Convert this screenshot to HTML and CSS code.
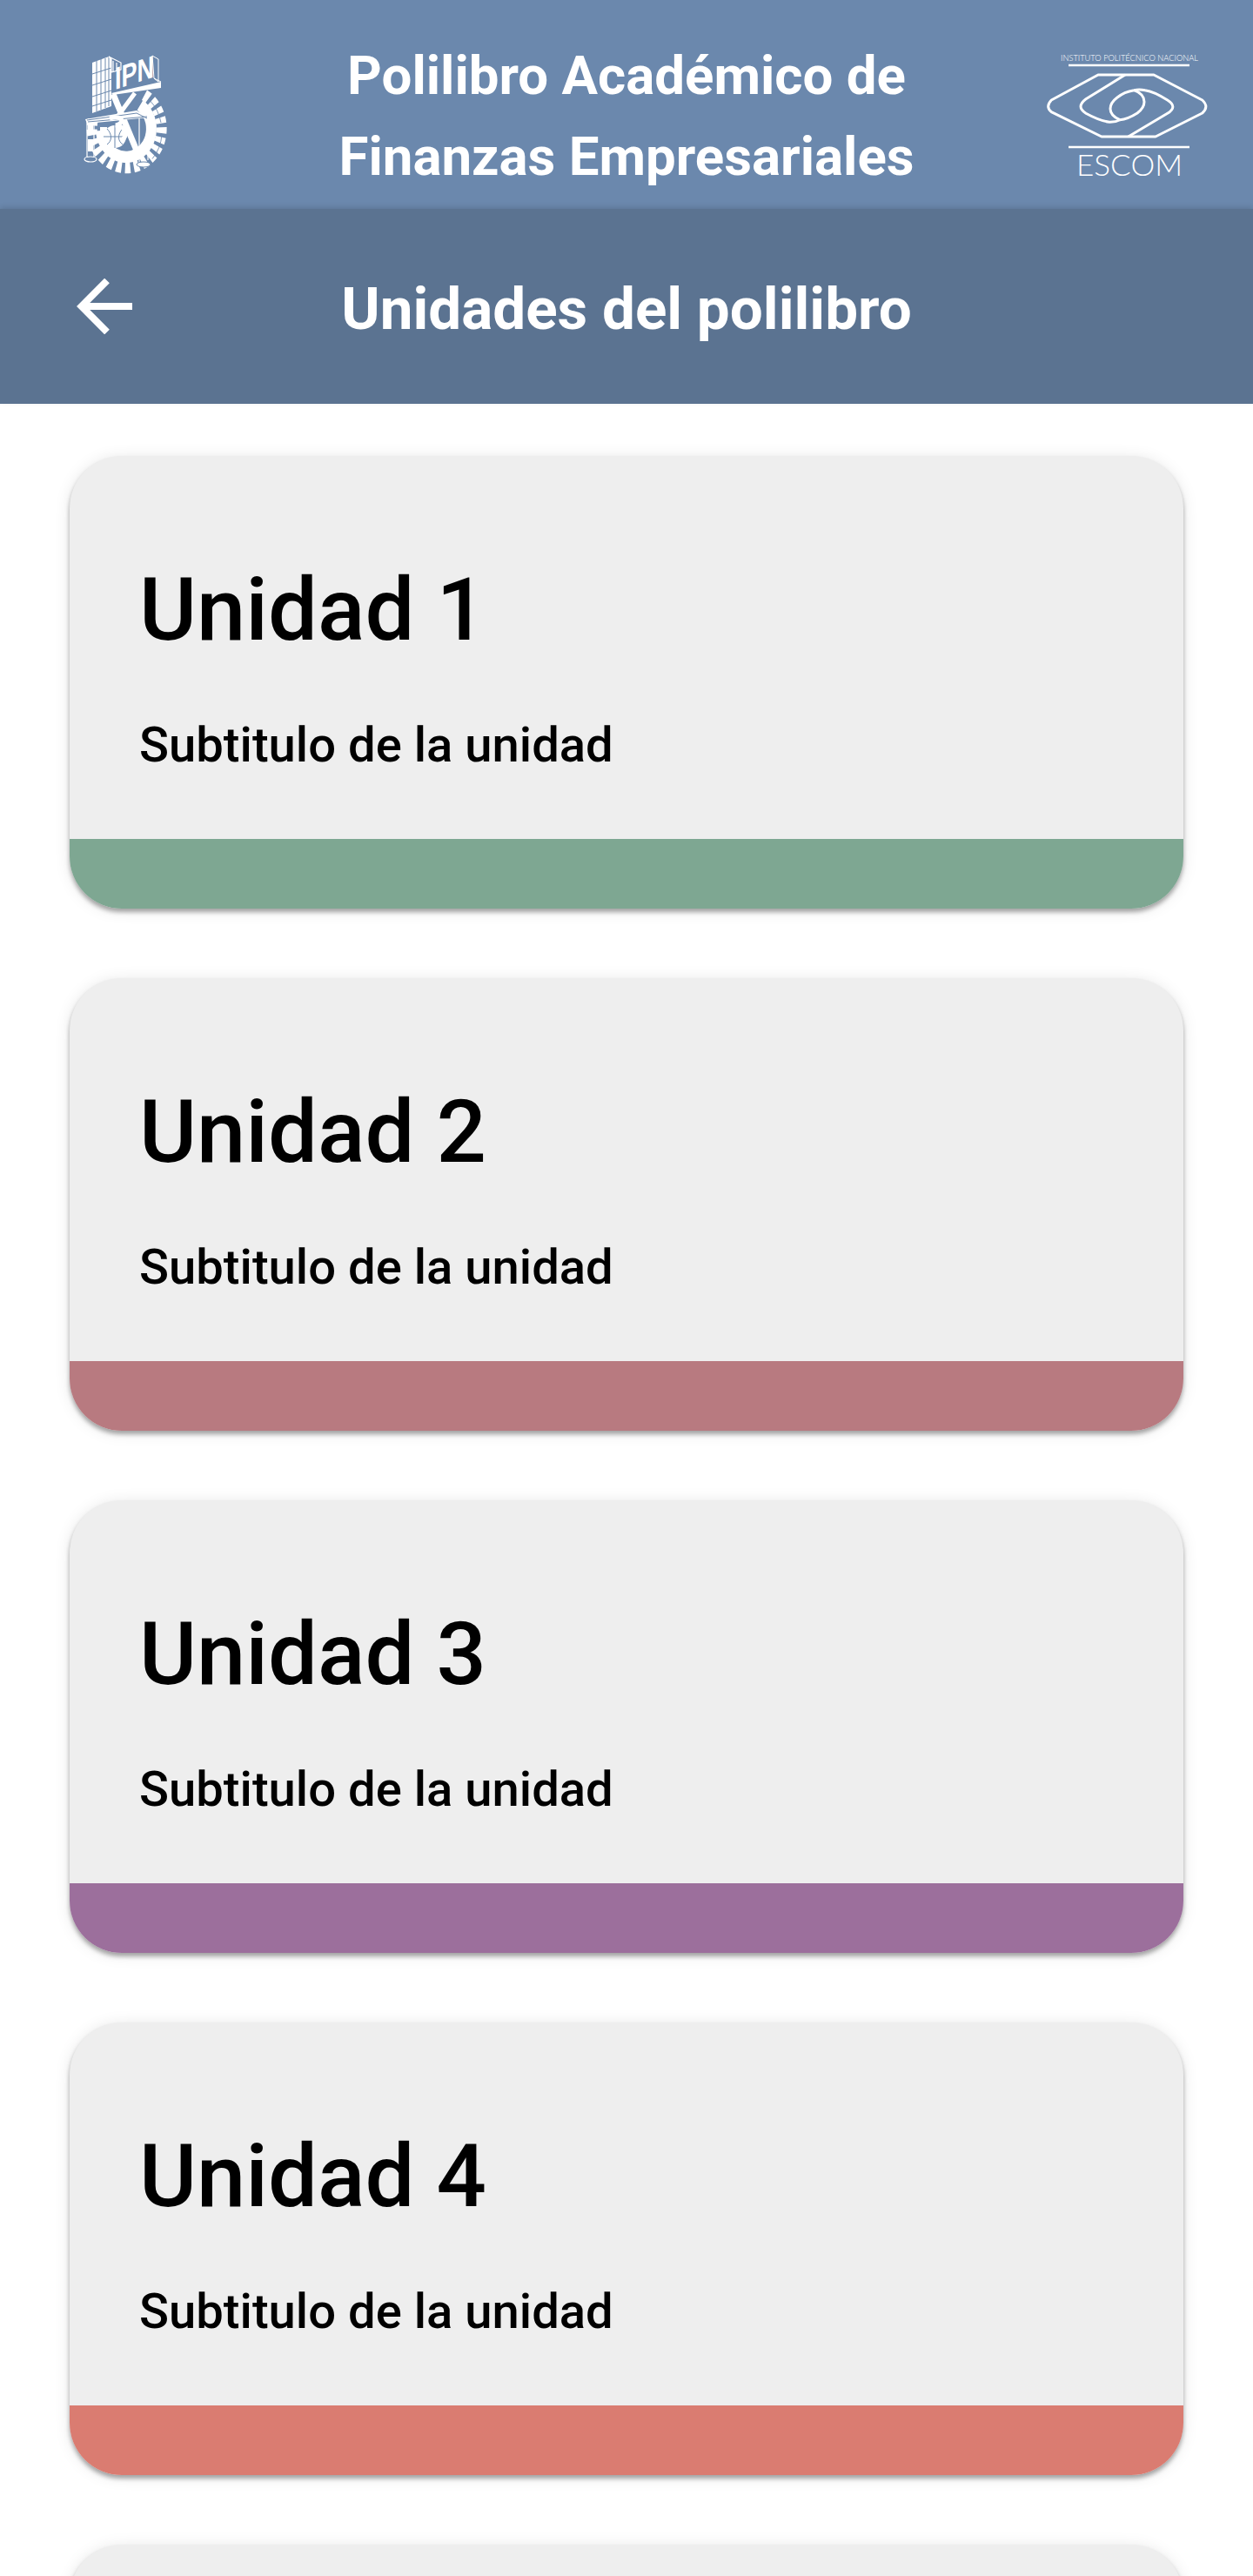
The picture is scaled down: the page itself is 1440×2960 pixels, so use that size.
FILE: index.html
```html
<!DOCTYPE html>
<html lang="es">
<head>
    <meta charset="UTF-8">
    <meta name="viewport" content="width=device-width, initial-scale=1.0">
    <title>Unidades del polilibro</title>
    <link rel="stylesheet" href="styles.css">
</head>
<body>
    <header class="top-bar">
        <svg class="logo-ipn" viewBox="0 0 94 140" width="94" height="140">
            <!-- engrane -->
            <g transform="translate(48 88) scale(1 1.12)" fill="none">
                <path d="M21 -36.4A40 40 0 1 1 -37.6 -13.7" stroke="#fff" stroke-width="12" stroke-dasharray="6 4"/>
                <path d="M16 -26A29 29 0 1 1 -29 0" stroke="#fff" stroke-width="12"/>
                <path d="M27 -31A41 41 0 0 1 40 -8M41 4A41 41 0 0 1 30 29" stroke="#6b88ad" stroke-width="0.8"/>
            </g>
            <!-- cruz interior, balanza y globo -->
            <path d="M33 46L60 111" stroke="#fff" stroke-width="7" fill="none"/>
            <path d="M58 45L38 72" stroke="#fff" stroke-width="5" fill="none"/>
            <path d="M1 75L60 65L74 73L3 80z" fill="#fff"/>
            <path d="M3 76L60 68L72 74M4 78L72 72" stroke="#6b88ad" stroke-width="1" fill="none"/>
            <path d="M3 78V118M11 78V118M63 74V125M73 74V122M3 118L7 120M11 118L7 120" stroke="#fff" stroke-width="1.2" fill="none"/>
            <path d="M4 80H10V90H4zM4 98H10V112H4z" fill="#fff"/>
            <ellipse cx="7" cy="121" rx="7" ry="3" fill="#6b88ad" stroke="#fff" stroke-width="1.2"/>
            <ellipse cx="68" cy="127" rx="8" ry="3" fill="#fff" stroke="#6b88ad" stroke-width="1"/>
            <path d="M18 84C17 112 34 122 52 124L64 120C44 118 26 108 26 84z" fill="#fff"/>
            <circle cx="35" cy="95" r="13" fill="#fff"/>
            <path d="M22 95H48M35 82V108M26 86C32 92 32 100 26 104M44 86C38 92 38 100 44 104" stroke="#6b88ad" stroke-width="1" fill="none"/>
            <path d="M29 74C46 70 46 80 36 82C50 84 50 94 42 100" stroke="#fff" stroke-width="5" fill="none"/>
            <!-- edificio -->
            <path d="M9 10L28 3L31 6V60L9 68z" fill="#fff"/>
            <path d="M14 8V66M19 6V64M24 5V62M28 3V60M9 23L31 16M9 36L31 29M9 49L31 42M9 60L31 53" stroke="#6b88ad" stroke-width="1" fill="none"/>
            <path d="M28 3L42 10V18L31 21V6zM33 8V20M37 10V19" fill="none" stroke="#fff" stroke-width="1.2"/>
            <!-- letras con su relieve -->
            <text class="ipn-text" transform="translate(35 41) skewY(-18)" textLength="45" lengthAdjust="spacingAndGlyphs">IPN</text>
            <path d="M78 2L85 6V32L80 28z" fill="none" stroke="#fff" stroke-width="1"/>
            <path d="M31 45L88 32V39L33 47z" fill="#fff"/>
            <path d="M80 28L88 32" stroke="#fff" stroke-width="1"/>
        </svg>
        <h1 class="app-title">Polilibro Académico de<br>Finanzas Empresariales</h1>
        <svg class="logo-escom" viewBox="0 0 183 140" width="183" height="140">
            <text class="escom-small" x="15" y="8" textLength="158" lengthAdjust="spacingAndGlyphs">INSTITUTO POLITÉCNICO NACIONAL</text>
            <path d="M24 13H163M24 107H163" stroke="#fff" stroke-width="2.4"/>
            <g fill="none" stroke="#fff" stroke-width="3" stroke-linejoin="round">
                <path d="M58 24H122L177.7 53Q186 60.7 177.7 68L124 95H62L4.3 66.7Q-3 60.7 4.3 53Z"/>
                <path d="M89 24L44 51.7Q32 60.7 44 68.3Q60 77 71 78.3Q78 78.5 83 75.7"/>
                <path d="M92.7 95L137.7 68.3Q150 60.7 137.7 53Q122 43 112 41.7Q105 40.5 99.3 41.7Q88 43.5 80 50Q72 56 72 63Q72 71 83 75.7"/>
                <path d="M99.3 41.7Q111 46 111 55Q111 62 103 68Q92 75 83 75.7"/>
            </g>
            <text class="escom-big" x="33" y="140" textLength="122" lengthAdjust="spacingAndGlyphs">ESCOM</text>
        </svg>
    </header>

    <nav class="section-bar">
        <a class="back-link" href="#" aria-label="Regresar">
            <svg viewBox="0 0 64 64" width="64" height="64">
                <path d="M64 32H6M35 2.5L5.7 32L35 61.5" fill="none" stroke="#fff" stroke-width="8"/>
            </svg>
        </a>
        <h2 class="section-title">Unidades del polilibro</h2>
    </nav>

    <main class="unit-list">
        <article class="unit-card">
            <div class="unit-body">
                <h3 class="unit-name">Unidad 1</h3>
                <p class="unit-sub">Subtitulo de la unidad</p>
            </div>
            <div class="unit-band band-green"></div>
        </article>
        <article class="unit-card">
            <div class="unit-body">
                <h3 class="unit-name">Unidad 2</h3>
                <p class="unit-sub">Subtitulo de la unidad</p>
            </div>
            <div class="unit-band band-rose"></div>
        </article>
        <article class="unit-card">
            <div class="unit-body">
                <h3 class="unit-name">Unidad 3</h3>
                <p class="unit-sub">Subtitulo de la unidad</p>
            </div>
            <div class="unit-band band-purple"></div>
        </article>
        <article class="unit-card">
            <div class="unit-body">
                <h3 class="unit-name">Unidad 4</h3>
                <p class="unit-sub">Subtitulo de la unidad</p>
            </div>
            <div class="unit-band band-coral"></div>
        </article>
        <article class="unit-card"></article>
    </main>
</body>
</html>
```

FILE: styles.css
```css
body {
    font-family: Roboto, "Liberation Sans", sans-serif;
    background-color: #ffffff;
    color: #000000;
    margin: 0;
}
.top-bar {
    height: 240px;
    background-color: #6b88ad;
    display: grid;
    grid-template-columns: 1fr auto 1fr;
    align-items: center;
    padding: 0 53px;
    box-sizing: border-box;
}
.logo-ipn {
    justify-self: start;
    margin: 24px 0 0 44px;
    overflow: visible;
}
.logo-escom {
    justify-self: end;
    margin-top: 24px;
    overflow: visible;
}
.app-title {
    margin: 0;
    align-self: start;
    padding-top: 41px;
    color: #ffffff;
    font-size: 61.8px;
    font-weight: 700;
    line-height: 92.5px;
    text-align: center;
}
.ipn-text {
    font-family: "Liberation Sans", sans-serif;
    font-size: 36px;
    font-weight: 700;
    fill: #ffffff;
}
.escom-small {
    font-family: Lato, sans-serif;
    font-size: 9.6px;
    font-weight: 300;
    fill: #ffffff;
}
.escom-big {
    font-family: Lato, sans-serif;
    font-size: 33px;
    font-weight: 300;
    fill: #ffffff;
}
.section-bar {
    height: 224px;
    background-color: #5b7391;
    display: grid;
    grid-template-columns: 1fr auto 1fr;
    align-items: center;
    padding: 0 88px;
    box-shadow: 0 -2px 6px rgba(0,0,0,0.12);
}
.back-link {
    display: block;
    height: 64px;
    justify-self: start;
}
.section-title {
    margin: 0;
    padding-top: 4px;
    color: #ffffff;
    font-size: 67.4px;
    font-weight: 700;
}
.unit-list {
    height: 2496px;
    box-sizing: border-box;
    overflow: hidden;
    display: flex;
    flex-direction: column;
    gap: 80px;
    padding: 60px 80px 0;
}
.unit-card {
    height: 520px;
    flex: none;
    background-color: #eeeeee;
    border-radius: 60px;
    overflow: hidden;
    display: flex;
    flex-direction: column;
    box-shadow: 0 4px 5px rgba(0,0,0,0.32), 0 2px 18px rgba(0,0,0,0.1);
}
.unit-body {
    flex: 1;
    padding: 118px 80px 0;
}
.unit-name {
    margin: 0;
    font-size: 101px;
    font-weight: 500;
    line-height: 118px;
}
.unit-sub {
    margin: 63px 0 0;
    font-size: 56.2px;
    font-weight: 500;
    line-height: 66px;
}
.unit-band {
    height: 80px;
}
.band-green { background-color: #7ea792; }
.band-rose { background-color: #b87a80; }
.band-purple { background-color: #9c6f9c; }
.band-coral { background-color: #da7c71; }
```
